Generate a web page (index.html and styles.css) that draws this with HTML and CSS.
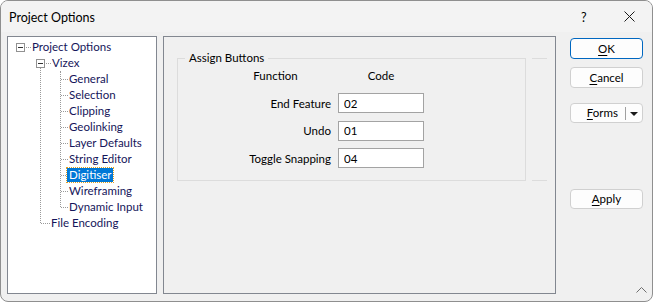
FILE: index.html
```html
<!DOCTYPE html>
<html lang="en">
<head>
<meta charset="utf-8">
<title>Project Options</title>
<link rel="stylesheet" href="styles.css">
</head>
<body>
<div class="window">
  <div class="titlebar">
    <span class="title">Project Options</span>
    <span class="help">?</span>
    <span class="close">
      <svg width="11" height="11" viewBox="0 0 11 11"><path d="M0.5 0.5 L10.5 10.5 M10.5 0.5 L0.5 10.5" stroke="#1a1a1a" stroke-width="1"/></svg>
    </span>
  </div>

  <div class="dlgbody">
    <div class="treepanel">
      <ul class="tree">
        <li>
          <div class="row r0"><span class="exp"></span><span class="twig tw0"></span><span class="lbl">Project Options</span></div>
          <ul class="l1">
            <li>
              <div class="row r1"><span class="exp"></span><span class="twig tw1"></span><span class="lbl">Vizex</span></div>
              <ul class="l2">
                <li class="row r2"><span class="twig tw2"></span><span class="lbl">General</span></li>
                <li class="row r2"><span class="twig tw2"></span><span class="lbl">Selection</span></li>
                <li class="row r2"><span class="twig tw2"></span><span class="lbl">Clipping</span></li>
                <li class="row r2"><span class="twig tw2"></span><span class="lbl">Geolinking</span></li>
                <li class="row r2"><span class="twig tw2"></span><span class="lbl">Layer Defaults</span></li>
                <li class="row r2"><span class="twig tw2"></span><span class="lbl">String Editor</span></li>
                <li class="row r2"><span class="twig tw2"></span><span class="lbl selected">Digitiser</span></li>
                <li class="row r2"><span class="twig tw2"></span><span class="lbl">Wireframing</span></li>
                <li class="row r2"><span class="twig tw2"></span><span class="lbl">Dynamic Input</span></li>
              </ul>
            </li>
            <li class="row r1b"><span class="twig tw1b"></span><span class="lbl">File Encoding</span></li>
          </ul>
        </li>
      </ul>
    </div>

    <div class="pagepanel">
      <div class="grouprow">
        <fieldset class="group">
          <legend>Assign Buttons</legend>
          <div class="assign">
            <div class="hdr">Function</div>
            <div class="hdr center">Code</div>
            <label class="fn" for="b1">End Feature</label>
            <input id="b1" class="code" type="text" value="02">
            <label class="fn" for="b2">Undo</label>
            <input id="b2" class="code" type="text" value="01">
            <label class="fn" for="b3">Toggle Snapping</label>
            <input id="b3" class="code" type="text" value="04">
          </div>
        </fieldset>
        <div class="grouptail"></div>
      </div>
    </div>

    <div class="buttons">
      <button class="btn default"><u>O</u>K</button>
      <button class="btn cancel"><u>C</u>ancel</button>
      <div class="btn split">
        <span class="splitlbl"><u>F</u>orms</span>
        <span class="splitsep"></span>
        <span class="splitarrow"></span>
      </div>
      <button class="btn apply"><u>A</u>pply</button>
    </div>
  </div>

  <span class="grip">
    <svg width="11" height="6" viewBox="0 0 11 6"><path d="M0.5 5.5 L5.5 0.5 L10.5 5.5" fill="none" stroke="#6e6e6e" stroke-width="1"/></svg>
  </span>
</div>
</body>
</html>
```

FILE: styles.css
```css
html, body {
    margin: 0;
    padding: 0;
    background: #ffffff;
}

body {
    font-family: Lato, "Noto Sans", "Liberation Sans", Arial, sans-serif;
    font-size: 11.5px;
    color: #000000;
}

.window {
    position: relative;
    width: 653px;
    height: 302px;
    box-sizing: border-box;
    border: 1px solid #8f8f8f;
    border-radius: 8px;
    background: #f0f0f0;
    display: flex;
    flex-direction: column;
    overflow: hidden;
}

/* title bar */
.titlebar {
    height: 31px;
    flex: none;
    display: flex;
    align-items: center;
    padding-left: 8px;
    background: #f3f3f3;
}
.title {
    font-size: 12.5px;
    flex: 1;
    padding-top: 1px;
}
.help {
    font-size: 12.5px;
    width: 12px;
    margin-right: 31px;
    padding-top: 1px;
}
.close {
    width: 11px;
    height: 11px;
    margin-right: 17px;
    display: flex;
}

.dlgbody {
    flex: 1;
    display: flex;
    padding: 4px 9px 7px 6px;
    min-height: 0;
}

/* tree */
.treepanel {
    width: 150px;
    flex: none;
    box-sizing: border-box;
    border: 1px solid #828790;
    background: #ffffff;
    padding-top: 2px;
    color: #15155a;
}
.tree, .tree ul {
    list-style: none;
    margin: 0;
    padding: 0;
}
.tree ul {
    position: relative;
}
.tree ul.l1::before {
    content: "";
    position: absolute;
    left: 32px;
    top: 8px;
    bottom: 8px;
    border-left: 1px dotted #9a9a9a;
}
.tree ul.l2::before {
    content: "";
    position: absolute;
    left: 52px;
    top: 0;
    bottom: 8px;
    border-left: 1px dotted #9a9a9a;
}
.row {
    display: flex;
    align-items: center;
    height: 16px;
    line-height: 16px;
    white-space: nowrap;
}
.r0 { padding-left: 8px; }
.r1 { padding-left: 28px; }
.r2 { padding-left: 53px; }
.r1b { padding-left: 33px; }

.exp {
    position: relative;
    z-index: 1;
    width: 7px;
    height: 7px;
    border: 1px solid #919191;
    background: #ffffff;
    flex: none;
}
.exp::after {
    content: "";
    position: absolute;
    left: 1px;
    top: 3px;
    width: 5px;
    height: 1px;
    background: #333333;
}
.twig {
    flex: none;
    height: 0;
    border-top: 1px dotted #9a9a9a;
    margin-left: 1px;
}
.tw0 { width: 5px; }
.tw1 { width: 5px; }
.tw2 { width: 7px; margin-left: 0; }
.tw1b { width: 9px; margin-left: 0; }

.lbl {
    margin-left: 0;
    padding: 0 1px;
}
.lbl.selected {
    background: #0078d7;
    color: #ffffff;
    outline: 1px dotted #e0a020;
    line-height: 14px;
    margin-left: -1px;
    padding: 0 2px;
}

/* page */
.pagepanel {
    width: 393px;
    flex: none;
    box-sizing: border-box;
    border: 1px solid #828790;
    margin-left: 6px;
    background: #f0f0f0;
}
.grouprow {
    display: flex;
    align-items: stretch;
    margin: 13px 0 0 13px;
}
.group {
    width: 349px;
    box-sizing: border-box;
    margin: 0;
    border: 1px solid #dcdcdc;
    padding: 2px 0 12px 0;
    min-width: 0;
}
.group legend {
    margin-left: 7px;
    padding: 0 4px 0 4px;
    line-height: 16px;
}
.grouptail {
    width: 15px;
    margin: 8px 0 0 6px;
    border-top: 1px solid #dcdcdc;
    border-bottom: 1px solid #dcdcdc;
}
.assign {
    display: grid;
    grid-template-columns: 111px 86px;
    column-gap: 7px;
    row-gap: 7.5px;
    align-items: center;
    margin-left: 42px;
}
.hdr {
    text-align: center;
    line-height: 16px;
    margin-bottom: 1.5px;
}
.fn {
    text-align: right;
}
.code {
    box-sizing: border-box;
    height: 20px;
    width: 86px;
    margin: 0;
    border: 1px solid #a3a3a3;
    background: #ffffff;
    padding: 0 0 0 5px;
    font-family: inherit;
    font-size: 11.5px;
    color: #000000;
    outline: none;
}

/* buttons */
.buttons {
    width: 73px;
    flex: none;
    margin-left: 14px;
    padding-top: 2px;
    display: flex;
    flex-direction: column;
}
.btn {
    box-sizing: border-box;
    height: 21px;
    width: 73px;
    margin: 0;
    padding: 0;
    border: 1px solid #d0d0d0;
    border-radius: 4px;
    background: #fdfdfd;
    font-family: inherit;
    font-size: 11.5px;
    color: #000000;
    text-align: center;
    line-height: 19px;
}
.btn u {
    text-underline-offset: 2px;
}
.btn.default {
    border-color: #0067c0;
}
.btn.cancel {
    margin-top: 8px;
}
.btn.split {
    margin-top: 15px;
    height: 20px;
    display: flex;
    align-items: center;
    line-height: 18px;
}
.splitlbl {
    flex: 1;
    text-align: right;
    padding-right: 7px;
}
.splitsep {
    width: 1px;
    height: 13px;
    background: #a0a0a0;
}
.splitarrow {
    width: 0;
    height: 0;
    margin: 1px 4px 0 4px;
    border-left: 4px solid transparent;
    border-right: 4px solid transparent;
    border-top: 4px solid #1a1a1a;
}
.btn.apply {
    margin-top: 66px;
    height: 20px;
    line-height: 18px;
}

.grip {
    position: absolute;
    right: 5px;
    bottom: 8px;
    display: flex;
}
```
